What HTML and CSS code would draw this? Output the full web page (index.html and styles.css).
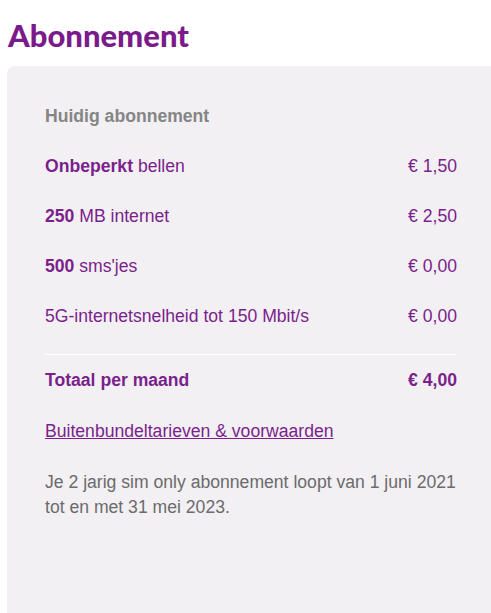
FILE: index.html
```html
<!DOCTYPE html>
<html lang="nl">
<head>
<meta charset="utf-8">
<title>Abonnement</title>
<link rel="stylesheet" href="styles.css">
</head>
<body>
<main class="page">
  <h1 class="title">Abonnement</h1>
  <section class="card">
    <h2 class="card-heading">Huidig abonnement</h2>
    <ul class="lines">
      <li class="line"><span><b>Onbeperkt</b> bellen</span><span>€ 1,50</span></li>
      <li class="line"><span><b>250</b> MB internet</span><span>€ 2,50</span></li>
      <li class="line"><span><b>500</b> sms'jes</span><span>€ 0,00</span></li>
      <li class="line"><span>5G-internetsnelheid tot 150 Mbit/s</span><span>€ 0,00</span></li>
    </ul>
    <div class="line total"><span>Totaal per maand</span><span>€ 4,00</span></div>
    <a class="terms" href="#">Buitenbundeltarieven &amp; voorwaarden</a>
    <p class="note">Je 2 jarig sim only abonnement loopt van 1 juni 2021 tot en met 31 mei 2023.</p>
  </section>
</main>
</body>
</html>
```
FILE: styles.css
```css
html, body {
  margin: 0;
  padding: 0;
  background: #ffffff;
}
body {
  font-family: "Liberation Sans", Arial, sans-serif;
  font-size: 17.6px;
  color: #7b1f8c;
}
.page {
  display: flex;
  flex-direction: column;
  padding-left: 7px;
  min-height: 613px;
  overflow: hidden;
}
.title {
  margin: 0;
  padding: 16px 0 0 1px;
  height: 66px;
  box-sizing: border-box;
  font-family: Lato, "Open Sans", sans-serif;
  font-weight: 900;
  font-size: 31px;
  line-height: 38px;
  color: #7b1b8b;
}
.card {
  flex: 1;
  background: #f2f0f3;
  border-radius: 8px 0 0 0;
  padding: 39px 34px 40px 38px;
  display: flex;
  flex-direction: column;
}
.card-heading {
  margin: 0;
  font-size: 17.6px;
  line-height: 22px;
  font-weight: 700;
  color: #858585;
}
.lines {
  list-style: none;
  margin: 14px 0 0 0;
  padding: 0;
  border-bottom: 1px solid #ffffff;
  padding-bottom: 13px;
}
.line {
  display: flex;
  justify-content: space-between;
  align-items: center;
  height: 50px;
}
.line b {
  font-weight: 700;
}
.total {
  font-weight: 700;
}
.terms {
  margin-top: 15px;
  line-height: 22px;
  color: #7b1f8c;
  text-decoration: underline;
  align-self: flex-start;
}
.note {
  margin: 28px 0 0 0;
  line-height: 25px;
  color: #6b6b6b;
}
```
